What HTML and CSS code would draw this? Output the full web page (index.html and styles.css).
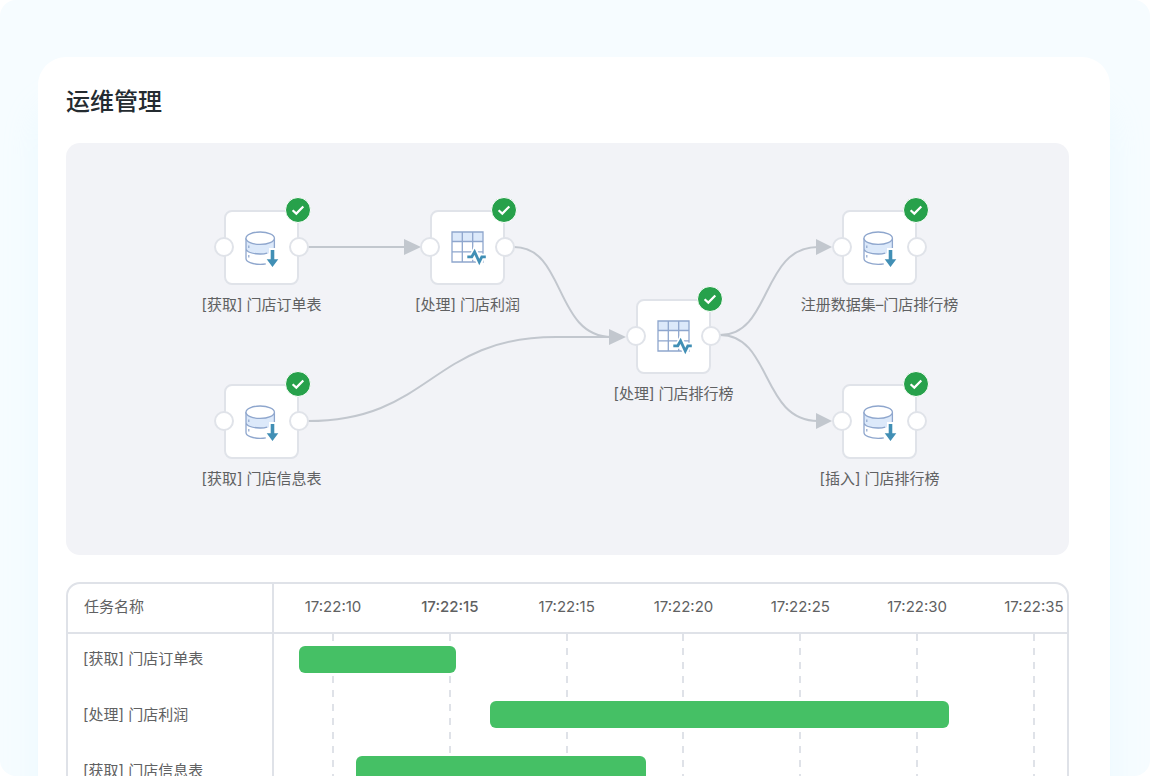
FILE: index.html
```html
<!DOCTYPE html>
<html lang="zh-CN">
<head>
<meta charset="utf-8">
<meta name="viewport" content="width=device-width, initial-scale=1">
<title>运维管理</title>
<link rel="stylesheet" href="styles.css">
</head>
<body>
<svg class="sprite" aria-hidden="true">
  <symbol id="icon-database" viewBox="0 0 38 38">
    <path d="M2 8v20.500c0 3.300 6.300 6 14.200 6s14.200-2.700 14.200-6V8z" fill="#fff"/>
    <path d="M2 8v10.500c0 3.300 6.300 6 14.200 6s14.200-2.700 14.200-6V8z" fill="#dce9fa"/>
    <path d="M2 8v20.500c0 3.300 6.300 5.800 14.200 5.800 2 0 4-.2 5.600-.5M30.400 8v11M2 18.500c0 3.300 6.300 5.500 14.200 5.500 3 0 5-.3 7-.9" fill="none" stroke="#8ea6cd" stroke-width="1.300"/>
    <ellipse cx="16.200" cy="8.200" rx="14.200" ry="6.200" fill="#fff" stroke="#8ea6cd" stroke-width="1.300"/>
    <path d="M4.800 15.500v2.500M4.800 25v2.500" stroke="#8ea6cd" stroke-width="1.200"/>
    <path d="M25 18h7v9.500h5L28.500 38 20.500 30v-2.500H25z" fill="#fff"/>
    <path d="M26.700 20h3.600v9.300h4L28.500 37l-5.800-7.700h4z" fill="#418fb5"/>
  </symbol>
  <symbol id="icon-table" viewBox="0 0 38 38">
    <path d="M2 2h31v30H2z" fill="#fff"/>
    <path d="M2 2h31v9.500H2z" fill="#dce9fa"/>
    <path d="M2 2h31v30H2zM2 11.500h31M2 21.800h31M12.300 2v30M22.700 2v30" fill="none" stroke="#8ea6cd" stroke-width="1.300"/>
    <path d="M16.500 26.800H22l2.700-5.300L29.400 33l2.600-6.200h5" fill="none" stroke="#fff" stroke-width="6"/>
    <path d="M17.300 26.800h4.500l2.800-5L29.300 32l2.500-5.200h4" fill="none" stroke="#418fb5" stroke-width="2.800"/>
  </symbol>
  <symbol id="icon-check" viewBox="0 0 24 24">
    <path d="M6.600 12.200l3.700 3.400L17.300 8.500" fill="none" stroke="#fff" stroke-width="2.200"/>
  </symbol>
</svg>

<div class="page">
  <main class="card">
    <h1 class="title">运维管理</h1>

    <section class="flow" aria-label="任务流程">
      <div class="stage">
        <svg class="edges" viewBox="0 0 1003 412" aria-hidden="true">
          <g class="edge-lines">
            <path d="M242 104H340"/>
            <path d="M448 104C500 104 488 194 546 194"/>
            <path d="M242 278C365 278 365 194 490 194H546"/>
            <path d="M654 192C706 192 695 104 752 104"/>
            <path d="M654 192C706 192 695 278 752 278"/>
          </g>
          <g class="edge-heads">
            <path d="M338 96l17 8-17 8z"/>
            <path d="M543 186l17 8-17 8z"/>
            <path d="M750 96l16 8-16 8z"/>
            <path d="M750 270l16 8-16 8z"/>
          </g>
        </svg>

        <div class="node node-orders">
          <svg class="node-icon"><use href="#icon-database"/></svg>
          <svg class="badge" role="img" aria-label="成功"><use href="#icon-check"/></svg>
          <span class="node-label">[获取] 门店订单表</span>
        </div>
        <div class="node node-profit">
          <svg class="node-icon"><use href="#icon-table"/></svg>
          <svg class="badge" role="img" aria-label="成功"><use href="#icon-check"/></svg>
          <span class="node-label">[处理] 门店利润</span>
        </div>
        <div class="node node-info">
          <svg class="node-icon"><use href="#icon-database"/></svg>
          <svg class="badge" role="img" aria-label="成功"><use href="#icon-check"/></svg>
          <span class="node-label">[获取] 门店信息表</span>
        </div>
        <div class="node node-rank">
          <svg class="node-icon"><use href="#icon-table"/></svg>
          <svg class="badge" role="img" aria-label="成功"><use href="#icon-check"/></svg>
          <span class="node-label">[处理] 门店排行榜</span>
        </div>
        <div class="node node-register">
          <svg class="node-icon"><use href="#icon-database"/></svg>
          <svg class="badge" role="img" aria-label="成功"><use href="#icon-check"/></svg>
          <span class="node-label">注册数据集–门店排行榜</span>
        </div>
        <div class="node node-insert">
          <svg class="node-icon"><use href="#icon-database"/></svg>
          <svg class="badge" role="img" aria-label="成功"><use href="#icon-check"/></svg>
          <span class="node-label">[插入] 门店排行榜</span>
        </div>
      </div>
    </section>

    <section class="gantt" aria-label="任务时间">
      <div class="gantt-names">
        <div class="gantt-head">任务名称</div>
        <ul class="names">
          <li>[获取] 门店订单表</li>
          <li>[处理] 门店利润</li>
          <li>[获取] 门店信息表</li>
        </ul>
      </div>
      <div class="gantt-chart">
        <div class="ticks">
          <span>17:22:10</span>
          <span class="current">17:22:15</span>
          <span>17:22:15</span>
          <span>17:22:20</span>
          <span>17:22:25</span>
          <span>17:22:30</span>
          <span>17:22:35</span>
        </div>
        <div class="plot">
          <div class="gridlines"><i></i><i></i><i></i><i></i><i></i><i></i><i></i></div>
          <div class="bars">
            <div class="bar" style="margin-left:3.2%;width:19.7%"></div>
            <div class="bar" style="margin-left:27.2%;width:57.9%"></div>
            <div class="bar" style="margin-left:10.3%;width:36.6%"></div>
          </div>
        </div>
      </div>
    </section>
  </main>
</div>
</body>
</html>
```
FILE: styles.css
```css
*,
*::before,
*::after {
  box-sizing: border-box;
}

body {
  margin: 0;
  background: #fff;
  color: #606162;
  font: 15px/24px Inter, "Noto Sans CJK SC", sans-serif;
}

.sprite {
  position: absolute;
  width: 0;
  height: 0;
}

.page {
  height: 100vh;
  overflow: hidden;
  padding: 57px 40px 0 38px;
  border-radius: 16px;
  background: #f6fcff;
}

.card {
  min-height: 100%;
  padding: 27px 41px 28px 28px;
  border-radius: 28px;
  background: #fff;
  box-shadow: 0 48px 36px rgba(200, 240, 255, 0.2);
}

.title {
  margin: 0 0 23px;
  color: #242b30;
  font-size: 24px;
  font-weight: 500;
  line-height: 36px;
}

.flow {
  display: flex;
  justify-content: center;
  margin-bottom: 27px;
  border-radius: 14px;
  background: #f2f3f7;
  overflow: hidden;
}

.stage {
  position: relative;
  flex: none;
  width: 1003px;
  height: 412px;
}

.edges {
  display: block;
  width: 100%;
  height: 100%;
}

.edge-lines {
  fill: none;
  stroke: #c2c7ce;
  stroke-width: 2;
}

.edge-heads {
  fill: #c2c7ce;
}

.node {
  position: absolute;
  width: 75px;
  height: 75px;
  border: 2px solid #e0e3e9;
  border-radius: 8px;
  background: #fff;
}

.node::before,
.node::after {
  content: "";
  position: absolute;
  top: 25px;
  width: 20px;
  height: 20px;
  border: 2px solid #e0e3e9;
  border-radius: 50%;
  background: #fff;
}

.node::before {
  left: -12px;
}

.node::after {
  right: -12px;
}

.node-orders { left: 158px; top: 67px; }
.node-profit { left: 364px; top: 67px; }
.node-info { left: 158px; top: 241px; }
.node-rank { left: 570px; top: 156px; }
.node-register { left: 776px; top: 67px; }
.node-insert { left: 776px; top: 241px; }

.node-icon {
  display: block;
  width: 38px;
  height: 38px;
  margin: 18px 0 0 18px;
}

.badge {
  position: absolute;
  top: -15px;
  right: -14px;
  width: 26px;
  height: 26px;
  border: 1px solid #fff;
  border-radius: 50%;
  background: #27a14b;
}

.node-label {
  position: absolute;
  top: 81px;
  left: 50%;
  transform: translateX(-50%);
  white-space: nowrap;
}

.gantt {
  display: grid;
  grid-template-columns: 206px 1fr;
  border: 2px solid #dfe2e8;
  border-radius: 14px;
}

.gantt-names {
  border-right: 2px solid #dfe2e8;
}

.gantt-head,
.ticks {
  height: 50px;
  padding-top: 11px;
  border-bottom: 2px solid #dfe2e8;
}

.gantt-head {
  padding-left: 16px;
}

.names {
  display: grid;
  gap: 32px;
  margin: 0;
  padding: 13px 15px;
  list-style: none;
}

.gantt-chart {
  display: flex;
  flex-direction: column;
}

.ticks,
.gridlines {
  display: flex;
  justify-content: space-between;
  padding-right: 3px;
  padding-left: 29px;
}

.ticks span,
.gridlines i {
  width: 60px;
  text-align: center;
  white-space: nowrap;
}

.ticks .current {
  font-weight: 500;
}

.plot {
  display: grid;
  flex: 1;
}

.gridlines,
.bars {
  grid-area: 1 / 1;
}

.gridlines i {
  background: repeating-linear-gradient(#dfe2e8 0 7px, transparent 7px 14px) center / 2px 100% no-repeat;
}

.bars {
  display: flex;
  flex-direction: column;
  gap: 28px;
  padding: 12px 0;
}

.bar {
  height: 27px;
  border-radius: 6px;
  background: #45c065;
}
```
